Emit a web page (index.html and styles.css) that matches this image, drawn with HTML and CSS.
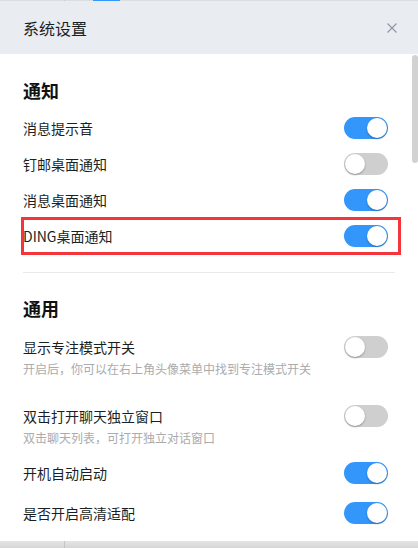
FILE: index.html
```html
<!DOCTYPE html>
<html lang="zh-CN">
<head>
	<meta charset="UTF-8">
	<title>系统设置</title>
	<link rel="stylesheet" href="styles.css">
</head>
<body>
	<div class="backdrop-top">
		<span class="tab-mark"></span>
		<span class="tab-active"></span>
	</div>
	<div class="dialog">
		<div class="dialog-header">
			<span class="dialog-title">系统设置</span>
			<a href="javascript:;" class="dialog-close">
				<svg width="10" height="10" viewBox="0 0 10 10"><path d="M0.5 0.5L9.5 9.5M9.5 0.5L0.5 9.5" stroke="#8d95a3" stroke-width="1.1" fill="none"/></svg>
			</a>
		</div>
		<div class="dialog-body">
			<div class="scroll-thumb"></div>
			<div class="section">
				<h3 class="section-title">通知</h3>
				<div class="row">
					<span class="row-label">消息提示音</span>
					<span class="switch on"></span>
				</div>
				<div class="row">
					<span class="row-label">钉邮桌面通知</span>
					<span class="switch"></span>
				</div>
				<div class="row">
					<span class="row-label">消息桌面通知</span>
					<span class="switch on"></span>
				</div>
				<div class="row marked">
					<span class="row-label">DING桌面通知</span>
					<span class="switch on"></span>
				</div>
			</div>
			<div class="divider"></div>
			<div class="section">
				<h3 class="section-title">通用</h3>
				<div class="row tall">
					<div class="row-text">
						<div class="row-label">显示专注模式开关</div>
						<div class="row-desc">开启后，你可以在右上角头像菜单中找到专注模式开关</div>
					</div>
					<span class="switch"></span>
				</div>
				<div class="row tall">
					<div class="row-text">
						<div class="row-label">双击打开聊天独立窗口</div>
						<div class="row-desc">双击聊天列表，可打开独立对话窗口</div>
					</div>
					<span class="switch"></span>
				</div>
				<div class="row wide">
					<span class="row-label">开机自动启动</span>
					<span class="switch on"></span>
				</div>
				<div class="row wide">
					<span class="row-label">是否开启高清适配</span>
					<span class="switch on"></span>
				</div>
			</div>
		</div>
	</div>
	<div class="backdrop-bottom">
		<span class="col-line"></span>
	</div>
</body>
</html>
```

FILE: styles.css
```css
html,body{
	margin:0;
	background: #fff;
	height: 100%;
	overflow: hidden;
}
body{
	font-family: "Noto Sans CJK SC", "Noto Sans", sans-serif;
	color: #191f25;
}
.backdrop-top{
	display: flex;
	height: 1px;
	background: #dadde2;
}
.backdrop-top .tab-mark{
	width: 1px;
	margin-left: 64px;
	background: #c9ccd1;
}
.backdrop-top .tab-active{
	width: 27px;
	margin-left: 28px;
	background: #3296fa;
}
.dialog{
	height: 540px;
	display: flex;
	flex-direction: column;
}
.dialog-header{
	height: 53px;
	flex-shrink: 0;
	background: #e9ecf1;
	display: flex;
	align-items: center;
	justify-content: space-between;
	padding: 0 21px 0 23px;
}
.dialog-title{
	font-size: 16px;
	line-height: 22px;
	margin-top: 1px;
	color: #191f25;
}
.dialog-close{
	display: flex;
	width: 10px;
	height: 10px;
	margin-top: 1px;
}
.dialog-body{
	flex: 1;
	position: relative;
	overflow: hidden;
	padding: 20px 23px 0 23px;
}
.scroll-thumb{
	position: absolute;
	right: 0;
	top: 1px;
	width: 6px;
	height: 108px;
	border-radius: 3px;
	background: #d2d2d2;
}
.section-title{
	margin: 0 0 4px;
	font-size: 18px;
	line-height: 32px;
	font-weight: bold;
	color: #111;
}
.row{
	display: flex;
	justify-content: space-between;
	align-items: center;
	height: 36px;
	padding-right: 7px;
	position: relative;
}
.row-label{
	font-size: 14px;
	line-height: 22px;
}
.row.marked::after{
	content: "";
	position: absolute;
	left: -2px;
	right: -6px;
	top: -1px;
	bottom: -1px;
	border: 3px solid #f5353c;
}
.row.tall{
	height: auto;
	align-items: flex-start;
	padding-top: 8px;
	padding-bottom: 5px;
}
.row.tall + .row.tall{
	margin-top: 13px;
}
.row.tall .switch{
	margin-top: 0;
}
.row-desc{
	margin-top: 1px;
	font-size: 12px;
	line-height: 20px;
	color: #a9abae;
}
.row.wide{
	height: 40px;
}
.switch{
	width: 44px;
	height: 22px;
	border-radius: 11px;
	background: #cfcfcf;
	position: relative;
	flex-shrink: 0;
}
.switch::before{
	content: "";
	position: absolute;
	top: 1px;
	left: 1px;
	width: 20px;
	height: 20px;
	border-radius: 50%;
	background: #fff;
	box-shadow: 0 1px 2px rgba(0,0,0,0.3);
}
.switch.on{
	background: #3296fa;
}
.switch.on::before{
	left: 23px;
}
.divider{
	height: 1px;
	margin: 18px 0 19px;
	background: #e8e8e8;
}
.backdrop-bottom{
	height: 7px;
	display: flex;
	background: linear-gradient(#e4e4e4, #d6d6d6);
}
.backdrop-bottom .col-line{
	width: 1px;
	margin-left: 64px;
	background: #c4c4c4;
}
```
